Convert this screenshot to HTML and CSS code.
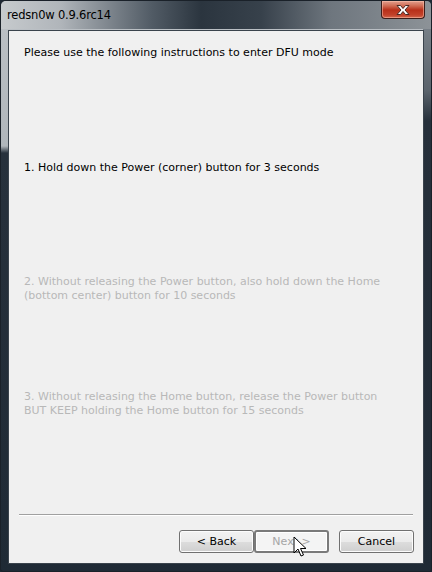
FILE: index.html
```html
<!DOCTYPE html>
<html>
<head>
<meta charset="utf-8">
<link rel="stylesheet" href="styles.css">
</head>
<body>
<div class="window">
  <div class="titlebar">
    <span class="title">redsn0w 0.9.6rc14</span>
    <div class="close">
      <svg width="18" height="12" viewBox="0 0 18 12">
        <path d="M3 1.5h3.5l2.5 3 2.5-3h3.5l-4 4.5 4 4.5h-3.5l-2.5-3-2.5 3h-3.5l4-4.5z" fill="#fff" stroke="#4a2a25" stroke-width="1" stroke-linejoin="round"/>
      </svg>
    </div>
  </div>
  <div class="client">
    <p class="heading">Please use the following instructions to enter DFU mode</p>
    <p class="step step1">1. Hold down the Power (corner) button for 3 seconds</p>
    <p class="step step2 dim">2. Without releasing the Power button, also hold down the Home<br>(bottom center) button for 10 seconds</p>
    <p class="step step3 dim">3. Without releasing the Home button, release the Power button<br>BUT KEEP holding the Home button for 15 seconds</p>
    <div class="spacer"></div>
    <div class="sep"></div>
    <div class="buttons">
      <button class="btn">&lt; Back</button>
      <button class="btn disabled">Next &gt;</button>
      <button class="btn cancel">Cancel</button>
      <svg class="cursor" width="14" height="22" viewBox="0 0 14 22">
        <path d="M1 1v16l4-4 3 7 2.5-1-3-6.5h5.5z" fill="#fff" stroke="#000" stroke-width="1" stroke-linejoin="miter"/>
      </svg>
    </div>
  </div>
</div>
</body>
</html>
```
FILE: styles.css
```css
html, body {
  margin: 0;
  padding: 0;
  background: #1e2833;
}
.window {
  width: 432px;
  height: 572px;
  box-sizing: border-box;
  border: 1px solid #1a2129;
  border-radius: 6px 6px 3px 3px;
  background:
    linear-gradient(to bottom, #bcc1c6 0px, #b0b6bb 145px, #27313c 152px, #1f2a35 572px);
  display: flex;
  flex-direction: column;
  position: relative;
  overflow: hidden;
}
.window::before {
  content: "";
  position: absolute;
  right: 0;
  top: 0;
  width: 8px;
  height: 572px;
  background: linear-gradient(to bottom, #858c93 0px, #5a636c 90px, #26303b 120px, #1f2a35 572px);
}
.titlebar {
  height: 28px;
  display: flex;
  align-items: flex-start;
  justify-content: space-between;
  background: linear-gradient(to right, #c6cacd 0px, #b0b5ba 60px, #525c66 150px, #2b353f 200px, #37414b 260px, #6e767e 330px, #8d9398 432px);
  position: relative;
  z-index: 1;
}
.title {
  font-family: "DejaVu Sans", sans-serif;
  font-size: 11.5px;
  color: #000;
  margin: 7px 0 0 6px;
  letter-spacing: -0.2px;
}
.close {
  width: 44px;
  height: 18px;
  margin-right: 6px;
  box-sizing: border-box;
  border: 1px solid #3b1d1a;
  border-top: none;
  border-radius: 0 0 4px 4px;
  background: linear-gradient(to bottom, #e3a08f 0px, #cf6a52 5px, #b8301a 9px, #c2412a 14px, #d9755c 18px);
  display: flex;
  align-items: center;
  justify-content: center;
  box-shadow: inset 0 0 0 1px rgba(255, 200, 180, 0.5);
}
.client {
  flex: 1;
  margin: 1px 7px 7px 7px;
  border: 1px solid #3a434c;
  background: #f0f0f0;
  display: flex;
  flex-direction: column;
  position: relative;
  z-index: 1;
  font-family: "DejaVu Sans", sans-serif;
  font-size: 11px;
  color: #000;
}
.client p {
  margin: 0;
  padding-left: 15px;
  line-height: 14px;
  letter-spacing: 0;
}
.heading { margin-top: 15px !important; }
.step1 { margin-top: 101px !important; }
.step2 { margin-top: 100px !important; }
.step3 { margin-top: 87px !important; }
.dim { color: #b8b8b8; }
.spacer { flex: 1; }
.sep {
  margin: 0 10px 0 10px;
  height: 1px;
  background: #a0a0a0;
  border-bottom: 1px solid #ffffff;
}
.buttons {
  display: flex;
  justify-content: flex-end;
  padding: 14px 9px 10px 0;
  position: relative;
}
.btn {
  width: 75px;
  height: 23px;
  box-sizing: border-box;
  border: 1px solid #707070;
  border-radius: 3px;
  background: linear-gradient(to bottom, #f2f2f2 0%, #ebebeb 50%, #dddddd 51%, #cfcfcf 100%);
  font-family: "DejaVu Sans", sans-serif;
  font-size: 11px;
  letter-spacing: 0;
  color: #000;
  padding: 0;
  box-shadow: inset 0 0 0 1px #fcfcfc;
}
.btn.disabled {
  color: #a6a6a6;
  border: 2px solid #7a7a7a;
  background: #f4f4f4;
  box-shadow: inset 0 0 0 1px #ffffff;
}
.btn.cancel { margin-left: 10px; }
.cursor {
  position: absolute;
  left: 284px;
  top: 20px;
}
```
